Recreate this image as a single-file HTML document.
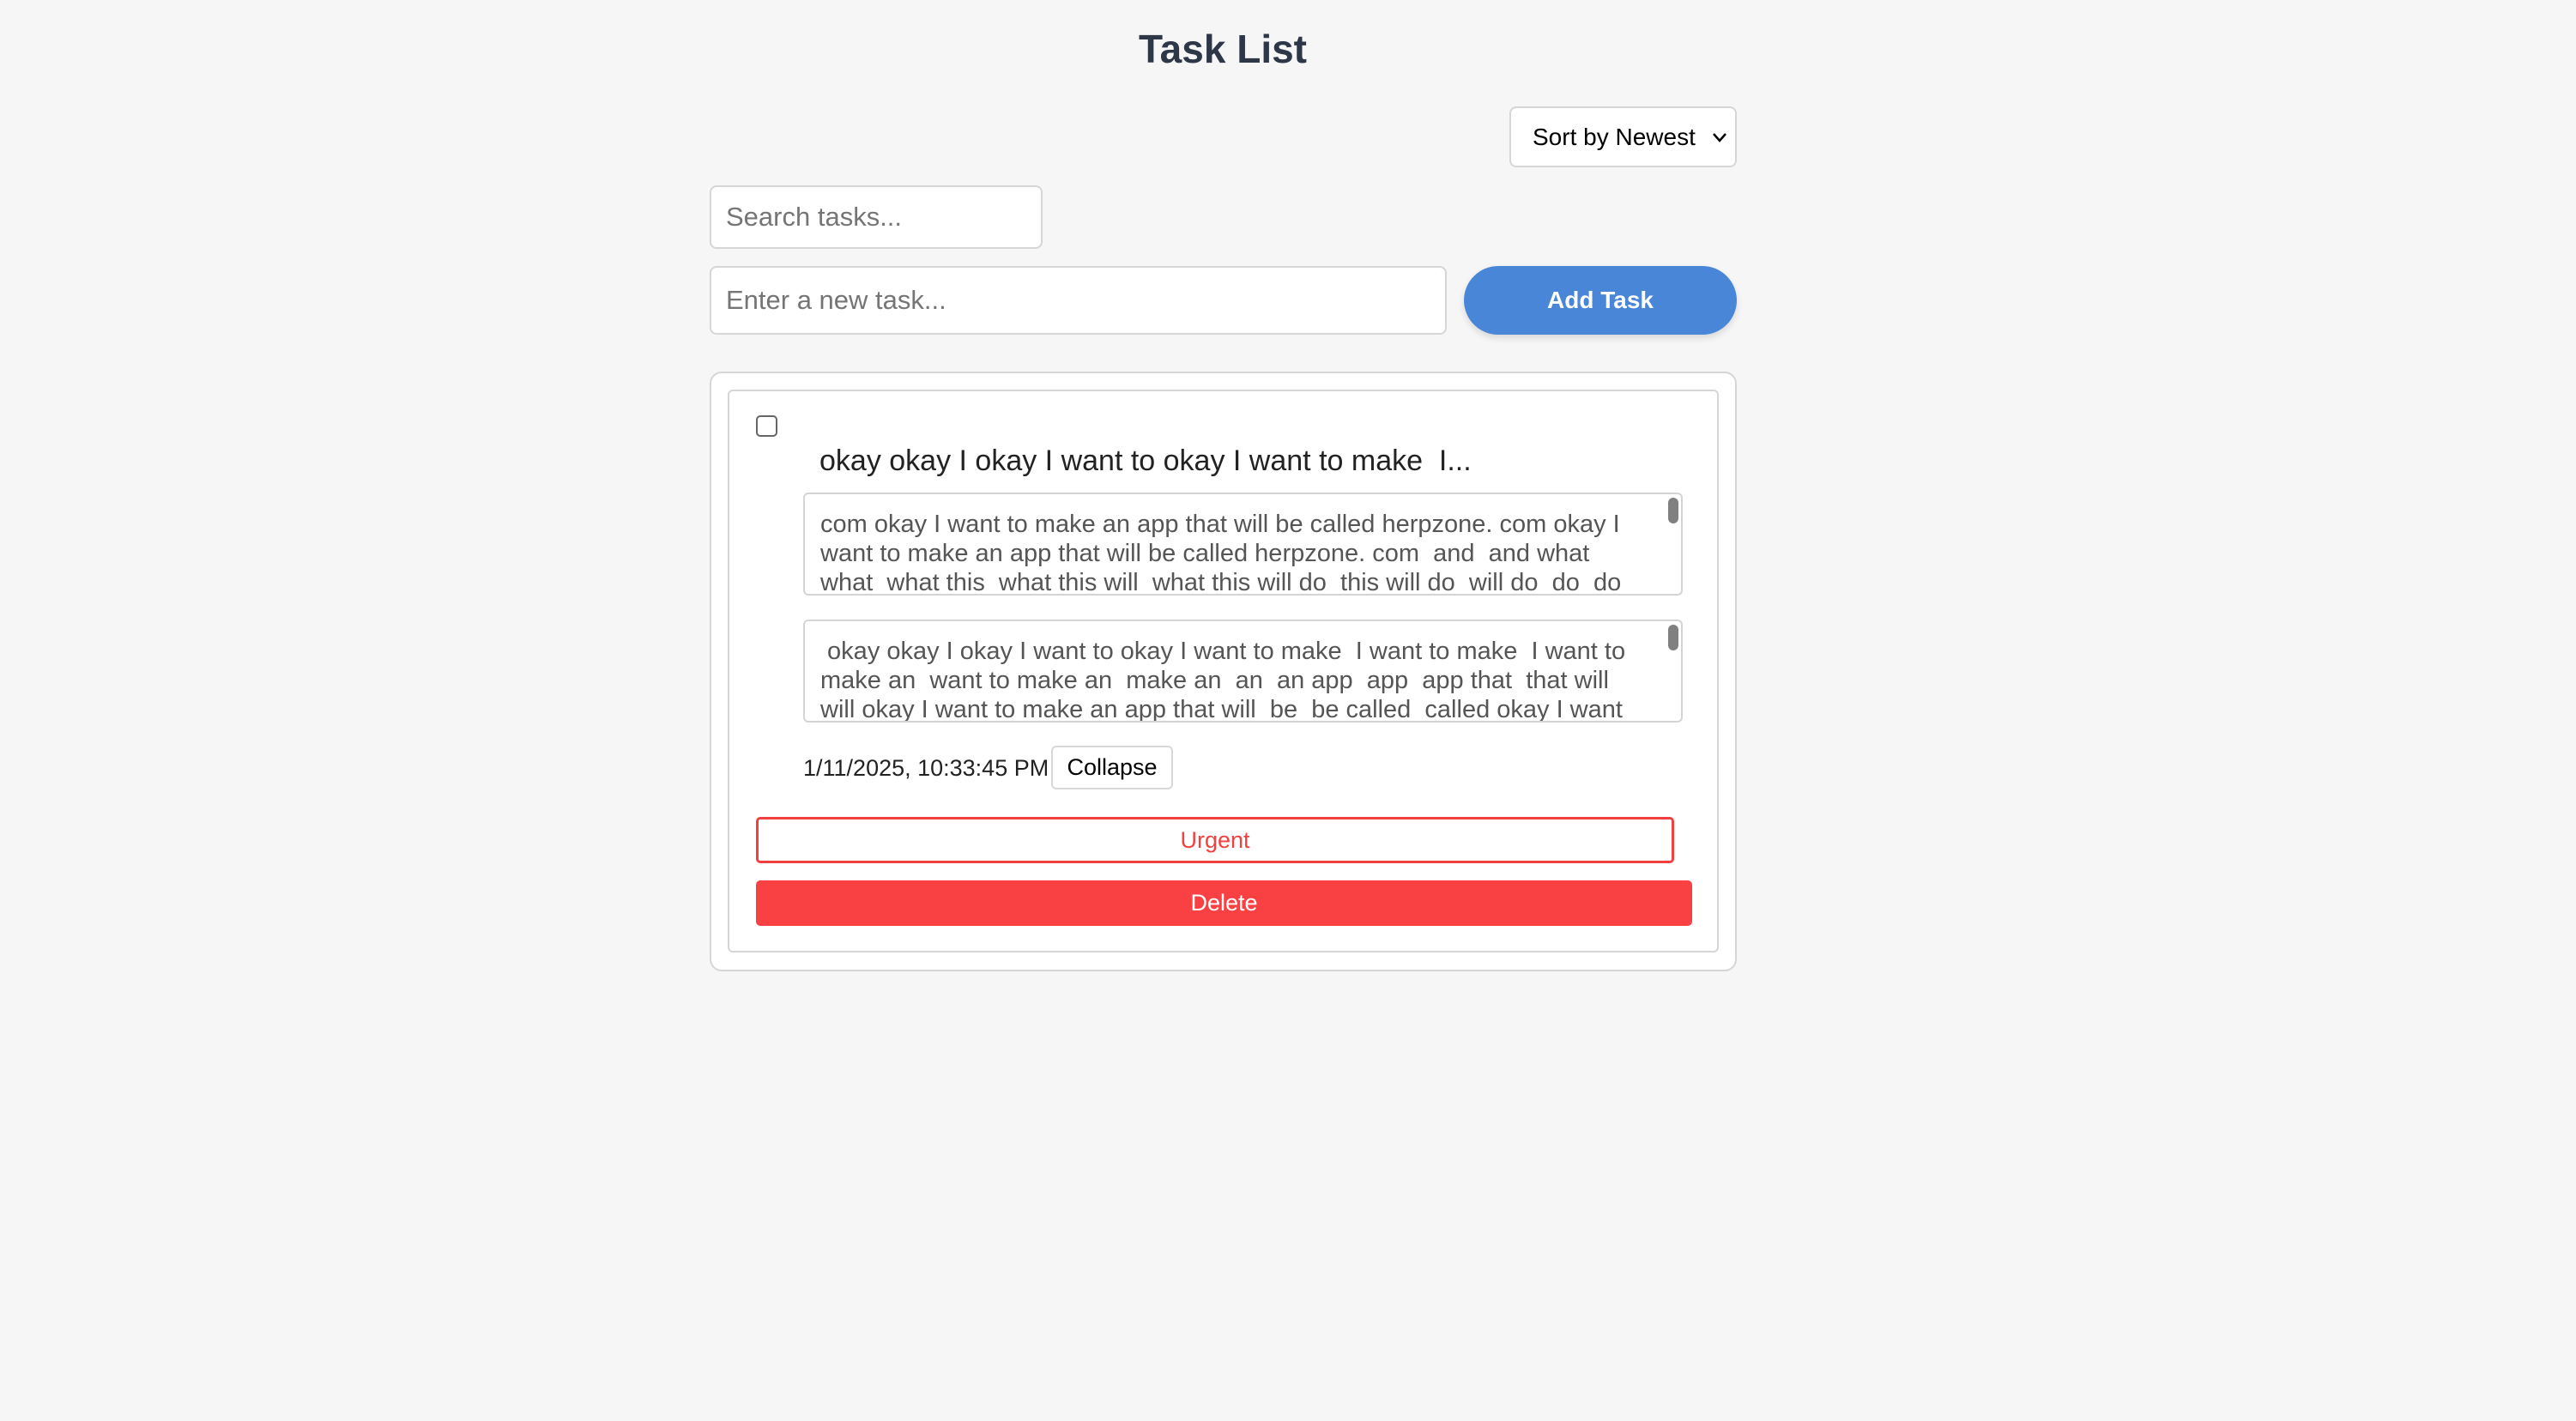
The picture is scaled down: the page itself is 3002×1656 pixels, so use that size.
<!DOCTYPE html>
<html><head><meta charset="utf-8"><style>
*{box-sizing:border-box;margin:0;padding:0}
body{width:3002px;height:1656px;background:#f6f6f6;font-family:"Liberation Sans",sans-serif;position:relative;overflow:hidden}
.a{position:absolute}
h1{position:absolute;left:0;width:2850px;text-align:center;top:30px;font-size:46px;color:#2d3748;font-weight:bold}
.box{background:#fff;border:2px solid #d6d6d6;border-radius:8px}
.ph{color:#757575;font-size:31px;padding-left:17px;display:flex;align-items:center}
.ta{background:#fff;border:2px solid #d4d4d4;border-radius:6px;font-size:29px;line-height:34px;color:#555;padding:18px 50px 0 18px;overflow:hidden;white-space:nowrap}
.sb{position:absolute;right:3px;top:4px;width:12px;height:30px;background:#808080;border-radius:6px}
</style></head><body>
<h1>Task List</h1>
<div class="a box" style="left:1759px;top:124px;width:265px;height:71px;font-size:28px;display:flex;align-items:center;padding-left:25px;color:#000">Sort by Newest<svg class="a" style="right:8px;top:27px" width="20" height="14" viewBox="0 0 20 14"><path d="M3 3l7 8 7-8" fill="none" stroke="#000" stroke-width="2.5"/></svg></div>
<div class="a box ph" style="left:827px;top:216px;width:388px;height:74px">Search tasks...</div>
<div class="a box ph" style="left:827px;top:310px;width:859px;height:80px">Enter a new task...</div>
<div class="a" style="left:1706px;top:310px;width:318px;height:80px;border-radius:40px;background:#4a86d8;color:#fff;font-size:28px;font-weight:bold;display:flex;align-items:center;justify-content:center;box-shadow:0 4px 8px rgba(0,0,0,.12)">Add Task</div>
<div class="a box" style="left:827px;top:433px;width:1197px;height:699px;border-radius:14px"></div>
<div class="a box" style="left:848px;top:454px;width:1155px;height:656px;border-radius:6px"></div>
<div class="a" style="left:881px;top:484px;width:25px;height:25px;border:2.5px solid #666;border-radius:5px;background:#fff"></div>
<div class="a" style="left:955px;top:518px;font-size:34px;color:#222">okay okay I okay I want to okay I want to make &nbsp;I...</div>
<div class="a ta" style="left:936px;top:574px;width:1025px;height:120px">com okay I want to make an app that will be called herpzone. com okay I<br>want to make an app that will be called herpzone. com &nbsp;and &nbsp;and what<br>what &nbsp;what this &nbsp;what this will &nbsp;what this will do &nbsp;this will do &nbsp;will do &nbsp;do &nbsp;do<div class="sb"></div></div>
<div class="a ta" style="left:936px;top:722px;width:1025px;height:120px">&nbsp;okay okay I okay I want to okay I want to make &nbsp;I want to make &nbsp;I want to<br>make an &nbsp;want to make an &nbsp;make an &nbsp;an &nbsp;an app &nbsp;app &nbsp;app that &nbsp;that will<br>will okay I want to make an app that will &nbsp;be &nbsp;be called &nbsp;called okay I want<div class="sb"></div></div>
<div class="a" style="left:936px;top:880px;font-size:27px;color:#222">1/11/2025, 10:33:45 PM</div>
<div class="a" style="left:1225px;top:869px;width:142px;height:51px;border:2px solid #d8d8d8;border-radius:6px;background:#fff;font-size:27px;display:flex;align-items:center;justify-content:center;color:#000">Collapse</div>
<div class="a" style="left:881px;top:952px;width:1070px;height:54px;border:3px solid #f04040;border-radius:5px;background:#fff;color:#f04040;font-size:27px;display:flex;align-items:center;justify-content:center">Urgent</div>
<div class="a" style="left:881px;top:1026px;width:1091px;height:53px;border-radius:5px;background:#f94144;color:#fff;font-size:27px;display:flex;align-items:center;justify-content:center">Delete</div>
</body></html>
